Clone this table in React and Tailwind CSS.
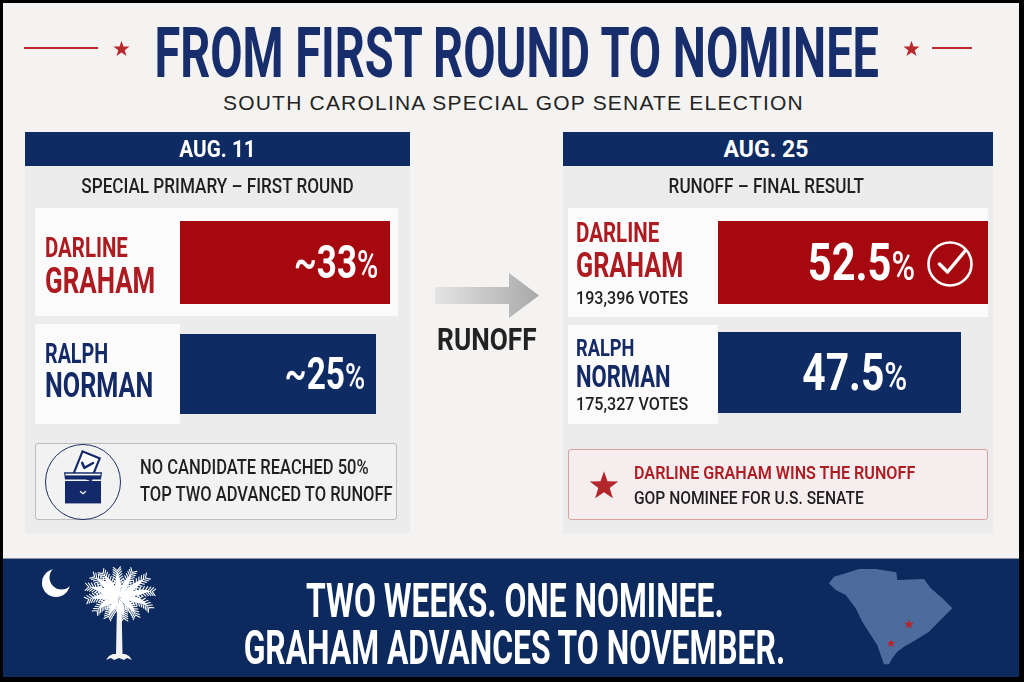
import React from "react";

function starPts(cx, cy, R, r) {
  const pts = [];
  for (let i = 0; i < 10; i++) {
    const a = -Math.PI / 2 + (i * Math.PI) / 5;
    const rr = i % 2 === 0 ? R : r;
    pts.push(`${(cx + rr * Math.cos(a)).toFixed(2)},${(cy + rr * Math.sin(a)).toFixed(2)}`);
  }
  return pts.join(" ");
}

function Star({ className, color = "#b8292e" }) {
  return (
    <svg viewBox="0 0 20 20" className={className}>
      <polygon points={starPts(10, 10.8, 10, 4)} fill={color} />
    </svg>
  );
}

function qpt(p0, p1, p2, t) {
  const a = (1 - t) * (1 - t), b = 2 * (1 - t) * t, c = t * t;
  return [a * p0[0] + b * p1[0] + c * p2[0], a * p0[1] + b * p1[1] + c * p2[1]];
}
function qtan(p0, p1, p2, t) {
  const x = 2 * (1 - t) * (p1[0] - p0[0]) + 2 * t * (p2[0] - p1[0]);
  const y = 2 * (1 - t) * (p1[1] - p0[1]) + 2 * t * (p2[1] - p1[1]);
  const l = Math.hypot(x, y) || 1;
  return [x / l, y / l];
}

function Frond({ base, ctrl, tip, w }) {
  const n = 14;
  const left = [], right = [];
  for (let i = 0; i <= n; i++) {
    const t = i / n;
    const p = qpt(base, ctrl, tip, t);
    const tg = qtan(base, ctrl, tip, t);
    const nx = -tg[1], ny = tg[0];
    const ww = w * Math.sin(Math.PI * Math.min(1, t * 1.15)) * (1 - t * 0.35);
    left.push([p[0] + nx * ww, p[1] + ny * ww]);
    right.push([p[0] - nx * ww, p[1] - ny * ww]);
  }
  const outline =
    "M" + left.map((p) => p[0].toFixed(2) + "," + p[1].toFixed(2)).join(" L") +
    " L" + right.reverse().map((p) => p[0].toFixed(2) + "," + p[1].toFixed(2)).join(" L") + "Z";
  const fe = [];
  for (let t = 0.3; t < 0.96; t += 0.09) {
    const p = qpt(base, ctrl, tip, t);
    const tg = qtan(base, ctrl, tip, t);
    const nx = -tg[1], ny = tg[0];
    const len = w * 2.1 * (1 - t * 0.5);
    fe.push(`M${p[0].toFixed(2)},${p[1].toFixed(2)} L${(p[0] + nx * len + tg[0] * 3.5).toFixed(2)},${(p[1] + ny * len + tg[1] * 3.5).toFixed(2)}`);
    fe.push(`M${p[0].toFixed(2)},${p[1].toFixed(2)} L${(p[0] - nx * len + tg[0] * 3.5).toFixed(2)},${(p[1] - ny * len + tg[1] * 3.5).toFixed(2)}`);
  }
  return (
    <g>
      <path d={outline} fill="#ffffff" />
      <path d={fe.join(" ")} stroke="#ffffff" strokeWidth="1.1" fill="none" strokeLinecap="round" />
    </g>
  );
}

function Palmetto() {
  const b = [79, 34];
  const fronds = [
    { c: [70, 17], t: [62, 7] },
    { c: [78, 15], t: [77, 4] },
    { c: [87, 16], t: [93, 6] },
    { c: [96, 19], t: [107, 12] },
    { c: [102, 24], t: [114, 27] },
    { c: [102, 32], t: [110, 44] },
    { c: [92, 38], t: [96, 52] },
    { c: [82, 42], t: [84, 55] },
    { c: [72, 41], t: [68, 53] },
    { c: [64, 36], t: [56, 47] },
    { c: [60, 29], t: [47, 35] },
    { c: [60, 22], t: [47, 22] },
    { c: [64, 17], t: [53, 11] },
  ];
  return (
    <svg viewBox="0 0 116 97" className="w-[116px] h-[97px]">
      <defs>
        <mask id="cres">
          <rect x="0" y="0" width="116" height="97" fill="white" />
          <circle cx="21.5" cy="12.5" r="12" fill="black" />
        </mask>
      </defs>
      <circle cx="16" cy="18" r="14" fill="#ffffff" mask="url(#cres)" />
      <polygon points="77,38 81.5,38 82.5,89 76,89" fill="#f2f2f2" />
      <path d="M66,95 L69,91 L73,89 L85,89 L89,91 L92,95 L87,93 L84,95 L79,93 L74,95 L71,93 Z" fill="#f2f2f2" />
      {fronds.map((f, i) => (
        <Frond key={i} base={b} ctrl={f.c} tip={f.t} w={3.2} />
      ))}
    </svg>
  );
}

function ScMap() {
  return (
    <svg viewBox="0 0 124 98" className="w-[124px] h-[98px]">
      <path
        d="M0,15.3 L5,8.7 L16.7,5.3 L30,1 L46.7,1 L67.3,4.3 L68.3,12 L95,11 L101.7,20.3 L113.3,30.3 L123.3,40.3 L113.3,50.3 L100,63.7 L86.7,72 L75,78.7 L68.3,83.7 L63.3,90.3 L60,96.3 L55,96.3 L51.7,87 L48.3,77 L41.7,67 L33.3,53.7 L26.7,40.3 L16.7,27 L6.7,22 Z"
        fill="#4d6c9e"
      />
      <polygon points={starPts(80, 56.5, 5, 2.1)} fill="#b3262b" />
      <polygon points={starPts(62, 75.5, 4.6, 2)} fill="#b3262b" />
    </svg>
  );
}

function BallotIcon() {
  return (
    <div className="w-[76px] h-[76px] rounded-full border-[1.5px] border-[#1b2f66] shrink-0 flex items-center justify-center">
      <svg viewBox="0 0 76 76" className="w-[76px] h-[76px]">
        <g transform="rotate(22 41 22)">
          <rect x="32" y="9" width="19" height="24" fill="#ffffff" stroke="#13296a" strokeWidth="2.2" />
          <path d="M36,20 L40,24 L46.5,16" stroke="#13296a" strokeWidth="2.6" fill="none" strokeLinecap="round" strokeLinejoin="round" />
        </g>
        <path d="M18.5,28 L57.5,28 L56.5,35.5 L19.5,35.5 Z" fill="#13296a" />
        <rect x="20" y="29.5" width="36" height="1.7" fill="#ffffff" />
        <rect x="19.5" y="37" width="37" height="23" fill="#13296a" />
        <path d="M35,47.5 L38,50 L41,47.5" stroke="#ffffff" strokeWidth="1.4" fill="none" />
      </svg>
    </div>
  );
}

function Arrow() {
  return (
    <svg viewBox="0 0 104 45" className="w-[104px] h-[45px]">
      <defs>
        <linearGradient id="ag" x1="0" y1="0" x2="1" y2="0">
          <stop offset="0" stopColor="#e4e4e4" />
          <stop offset="1" stopColor="#a9a9a9" />
        </linearGradient>
      </defs>
      <path d="M0,14 L74,14 L74,0 L104,22.5 L74,45 L74,31 L0,31 Z" fill="url(#ag)" />
    </svg>
  );
}

function CheckCircle() {
  return (
    <svg viewBox="0 0 48 48" className="w-[48px] h-[48px]">
      <circle cx="23" cy="25" r="21.5" stroke="#ffffff" strokeWidth="2.6" fill="none" />
      <path d="M12.5,25 L20.5,33 L38,12" stroke="#ffffff" strokeWidth="3.4" fill="none" strokeLinecap="round" strokeLinejoin="round" />
    </svg>
  );
}

export default function App() {
  return (
    <div className="w-[1024px] h-[682px] bg-black pt-[3px] pl-[3px] pr-[5px] pb-[5px] font-['Roboto',sans-serif]">
      <div className="h-full bg-[#f4f3f1] flex flex-col overflow-hidden">
        {/* HEADER */}
        <div className="h-[129px] shrink-0 flex flex-col pt-[15px]">
          <div className="h-[70px] flex items-center pl-[21px]">
            <div className="w-[74px] h-[2px] bg-[#c0282d] mb-[10px] shrink-0" />
            <Star className="ml-[15px] mb-[10px] w-[17px] h-[17px] shrink-0" />
            <div className="ml-[23px] w-[727px] shrink-0 flex justify-center">
              <span className="inline-block whitespace-nowrap text-[70px] leading-none font-bold text-[#182e6c] scale-x-[0.67]">
                FROM FIRST ROUND TO NOMINEE
              </span>
            </div>
            <Star className="ml-[23px] mb-[10px] w-[17px] h-[17px] shrink-0" />
            <div className="ml-[12px] w-[40px] h-[2px] bg-[#c0282d] mb-[10px] shrink-0" />
          </div>
          <div className="mt-[4px] h-[21px] flex justify-center pl-[5px]">
            <span className="font-['Liberation_Sans',sans-serif] text-[21px] leading-none tracking-[1.2px] text-[#232323] whitespace-nowrap">
              SOUTH CAROLINA SPECIAL GOP SENATE ELECTION
            </span>
          </div>
        </div>

        {/* MAIN */}
        <div className="h-[401px] shrink-0 flex pl-[22px]">
          {/* LEFT CARD */}
          <div className="w-[385px] h-full bg-[#ececec] flex flex-col shrink-0">
            <div className="h-[34px] bg-[#0f2b63] flex items-center justify-center">
              <span className="inline-block whitespace-nowrap text-[23px] leading-none font-bold text-white scale-x-[0.9]">AUG. 11</span>
            </div>
            <div className="h-[42px] flex items-center justify-center">
              <span className="inline-block whitespace-nowrap text-[19.7px] leading-none font-medium text-[#1f1f1f] scale-x-[0.87]">
                SPECIAL PRIMARY – FIRST ROUND
              </span>
            </div>
            <div className="ml-[10px] w-[363px] h-[108px] bg-[#fbfbfb] flex items-center pr-[8px]">
              <div className="w-[145px] h-full flex flex-col justify-center pl-[10px] pt-[8px] shrink-0">
                <span className="block whitespace-nowrap text-[28px] leading-[28px] font-bold text-[#ad1a20] origin-left scale-x-[0.73]">DARLINE</span>
                <span className="block whitespace-nowrap text-[37px] leading-[37px] font-bold text-[#ad1a20] origin-left scale-x-[0.7]">GRAHAM</span>
              </div>
              <div className="flex-1 h-[83px] bg-[#a5080f] flex items-center justify-end pr-[12px]">
                <span className="inline-block whitespace-nowrap text-[46px] leading-none font-bold text-white origin-right scale-x-[0.76]">
                  <span className="font-medium">~</span>33<span className="text-[38px] font-medium">%</span>
                </span>
              </div>
            </div>
            <div className="mt-[8px] ml-[10px] h-[100px] flex items-center">
              <div className="w-[145px] h-full bg-[#fbfbfb] flex flex-col justify-center pl-[10px] pb-[4px] shrink-0">
                <span className="block whitespace-nowrap text-[27px] leading-[27px] font-bold text-[#132a66] origin-left scale-x-[0.73]">RALPH</span>
                <span className="block whitespace-nowrap text-[35px] leading-[35px] font-bold text-[#132a66] origin-left scale-x-[0.72]">NORMAN</span>
              </div>
              <div className="w-[196px] h-[80px] bg-[#0f2b63] flex items-center justify-end pr-[11px]">
                <span className="inline-block whitespace-nowrap text-[44px] leading-none font-bold text-white origin-right scale-x-[0.76]">
                  <span className="font-medium">~</span>25<span className="text-[36px] font-medium">%</span>
                </span>
              </div>
            </div>
            <div className="mt-[19px] ml-[10px] w-[362px] h-[77px] border border-[#bdbdbd] rounded-[3px] bg-[#f2f2f2] flex items-center pl-[9px]">
              <BallotIcon />
              <div className="ml-[19px] flex flex-col text-[19.7px] leading-[26.5px] font-medium text-[#1f1f1f]">
                <span className="block whitespace-nowrap origin-left scale-x-[0.84]">NO CANDIDATE REACHED 50%</span>
                <span className="block whitespace-nowrap origin-left scale-x-[0.84]">TOP TWO ADVANCED TO RUNOFF</span>
              </div>
            </div>
          </div>

          {/* MIDDLE */}
          <div className="w-[153px] h-full shrink-0 flex flex-col items-center pt-[141px]">
            <Arrow />
            <span className="mt-[7px] inline-block whitespace-nowrap text-[30.5px] leading-none font-bold text-[#222222] scale-x-[0.86]">RUNOFF</span>
          </div>

          {/* RIGHT CARD */}
          <div className="w-[430px] h-full bg-[#ececec] flex flex-col shrink-0">
            <div className="h-[34px] bg-[#0f2b63] flex items-center justify-center pr-[24px]">
              <span className="inline-block whitespace-nowrap text-[23px] leading-none font-bold text-white">AUG. 25</span>
            </div>
            <div className="h-[42px] flex items-center justify-center pr-[24px]">
              <span className="inline-block whitespace-nowrap text-[19.7px] leading-none font-medium text-[#1f1f1f] scale-x-[0.87]">
                RUNOFF – FINAL RESULT
              </span>
            </div>
            <div className="ml-[5px] w-[420px] h-[109px] bg-[#fbfbfb] flex items-center">
              <div className="w-[150px] h-full flex flex-col justify-center pl-[8px] pt-[3px] shrink-0">
                <span className="block whitespace-nowrap text-[27px] leading-[27px] font-bold text-[#ad1a20] origin-left scale-x-[0.76]">DARLINE</span>
                <span className="block mt-[1px] whitespace-nowrap text-[35px] leading-[35px] font-bold text-[#ad1a20] origin-left scale-x-[0.72]">GRAHAM</span>
                <span className="block mt-[6px] whitespace-nowrap text-[18.5px] leading-none font-medium text-[#1f1f1f] origin-left scale-x-[0.87]">193,396 VOTES</span>
              </div>
              <div className="w-[270px] h-[83px] bg-[#a5080f] flex items-center justify-end pr-[13px] gap-[12px]">
                <span className="inline-block whitespace-nowrap text-[52px] leading-none font-bold text-white origin-right scale-x-[0.8]">
                  52.5<span className="text-[40px] font-medium">%</span>
                </span>
                <CheckCircle />
              </div>
            </div>
            <div className="mt-[8px] ml-[5px] h-[99px] flex items-start">
              <div className="w-[150px] h-full bg-[#fbfbfb] flex flex-col justify-center pl-[8px] shrink-0">
                <span className="block whitespace-nowrap text-[24px] leading-[24px] font-bold text-[#132a66] origin-left scale-x-[0.76]">RALPH</span>
                <span className="block mt-[1px] whitespace-nowrap text-[31px] leading-[31px] font-bold text-[#132a66] origin-left scale-x-[0.71]">NORMAN</span>
                <span className="block mt-[3px] whitespace-nowrap text-[18.5px] leading-none font-medium text-[#1f1f1f] origin-left scale-x-[0.87]">175,327 VOTES</span>
              </div>
              <div className="mt-[7px] w-[243px] h-[81px] bg-[#0f2b63] flex items-center justify-end pr-[54px]">
                <span className="inline-block whitespace-nowrap text-[51px] leading-none font-bold text-white origin-right scale-x-[0.8]">
                  47.5<span className="text-[39px] font-medium">%</span>
                </span>
              </div>
            </div>
            <div className="mt-[25px] ml-[5px] w-[420px] h-[71px] border border-[#d9a2a2] rounded-[3px] bg-[#f6eeee] flex items-center pl-[20px]">
              <Star className="w-[30px] h-[30px] shrink-0" color="#b3262b" />
              <div className="ml-[15px] flex flex-col text-[19px] leading-[25px]">
                <span className="block whitespace-nowrap font-semibold text-[#ad1f25] origin-left scale-x-[0.85]">DARLINE GRAHAM WINS THE RUNOFF</span>
                <span className="block whitespace-nowrap font-medium text-[#1f1f1f] origin-left scale-x-[0.82]">GOP NOMINEE FOR U.S. SENATE</span>
              </div>
            </div>
          </div>
        </div>

        <div className="h-[25px] shrink-0" />

        {/* FOOTER */}
        <div className="flex-1 bg-[#0c2a5e] border-t border-[#8a93a8] flex items-start pl-[37px]">
          <div className="mt-[6px] shrink-0">
            <Palmetto />
          </div>
          <div className="flex-1 min-w-0 flex flex-col items-center pt-[18px] pl-[44px] text-[48px] leading-[47px] font-bold text-white">
            <span className="block whitespace-nowrap scale-x-[0.663]">TWO WEEKS. ONE NOMINEE.</span>
            <span className="block whitespace-nowrap scale-x-[0.663]">GRAHAM ADVANCES TO NOVEMBER.</span>
          </div>
          <div className="mt-[9px] mr-[66px] shrink-0">
            <ScMap />
          </div>
        </div>
      </div>
    </div>
  );
}
